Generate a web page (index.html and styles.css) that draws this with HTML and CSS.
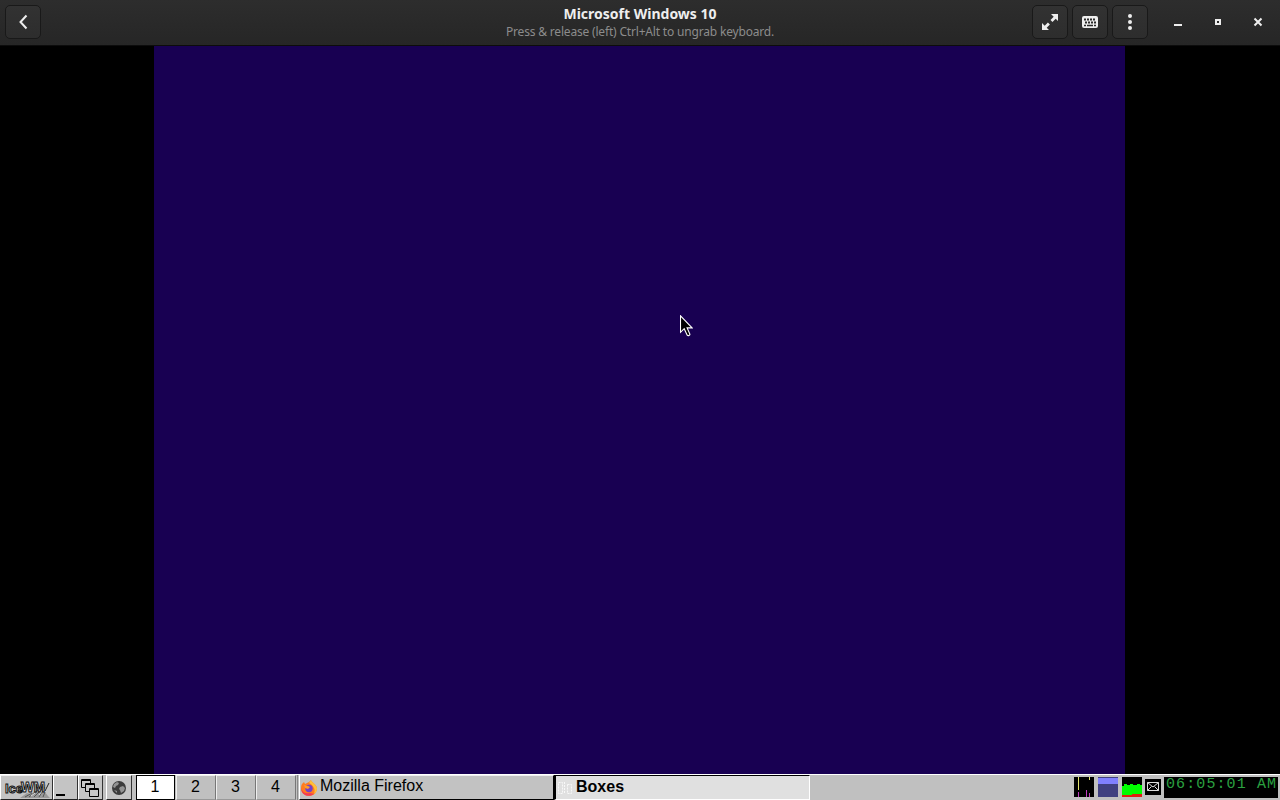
FILE: index.html
```html
<!DOCTYPE html>
<html lang="en">
<head>
  <meta charset="UTF-8" />
  <title>Microsoft Windows 10</title>
  <link rel="stylesheet" href="styles.css">
</head>
<body>
  <header class="headerbar">
    <button class="hbtn" aria-label="Back">
      <svg width="16" height="16" viewBox="0 0 16 16"><path d="M11.500 1.500 5.500 8l6 6.500" fill="none" stroke="#eee" stroke-width="2"/></svg>
    </button>
    <div class="titles">
      <div class="title">Microsoft Windows 10</div>
      <div class="subtitle">Press &amp; release (left) Ctrl+Alt to ungrab keyboard.</div>
    </div>
    <div class="actions">
      <button class="hbtn" aria-label="Fullscreen">
        <svg width="16" height="16" viewBox="0 0 16 16"><path d="M9 0h7v7l-2.300-2.300-3.200 3.200-2-2 3.200-3.200zM0 9v7h7l-2.300-2.300 3.200-3.200-2-2-3.200 3.200z" fill="#eee"/></svg>
      </button>
      <button class="hbtn" aria-label="Keyboard">
        <svg width="16" height="16" viewBox="0 0 16 16"><rect y="2" width="16" height="12" rx="2" fill="#eee"/><path d="M2 5.500h12M3 8.500h11" stroke="#2a2a2a" stroke-width="2" stroke-dasharray="2 1"/><path d="M2 11.500h2M5 11.500h6M12 11.500h2" stroke="#2a2a2a" stroke-width="1.500"/></svg>
      </button>
      <button class="hbtn" aria-label="Menu">
        <svg width="16" height="16" viewBox="0 0 16 16" fill="#eee"><circle cx="8" cy="2" r="2"/><circle cx="8" cy="8" r="2"/><circle cx="8" cy="14" r="2"/></svg>
      </button>
    </div>
    <div class="controls">
      <svg width="16" height="16" viewBox="0 0 16 16"><path d="M4 10h8v2H4z" fill="#eee"/></svg>
      <svg width="16" height="16" viewBox="0 0 16 16"><path d="M6 6h4v4H6z" fill="none" stroke="#eee" stroke-width="2"/></svg>
      <svg width="16" height="16" viewBox="0 0 16 16"><path d="m4.500 4.500 7 7m0-7-7 7" stroke="#eee" stroke-width="2"/></svg>
    </div>
  </header>

  <main class="display">
    <div class="guest">
      <svg class="pointer" width="13" height="22" viewBox="0 0 13 22"><path d="M.5.800v16.500l3.700-3.600 3 6.500c.8 1 3.200.2 2.600-1.300l-2.700-6h5z" fill="#000" stroke="#fff" stroke-width="1.100"/></svg>
    </div>
  </main>

  <footer class="taskbar">
    <div class="tb logo">
      <svg width="48" height="20" viewBox="0 0 48 20">
        <path d="m17 20 7-5 4 1 5-4 3 2 5-6 2-2-2 7 4 5 2 2z" fill="#999"/>
        <path d="m22 19 7-4m-3 4 9-7m-4 7 8-8m-3 8 6-10m-2 10 2-5" stroke="#555"/>
        <path d="m28 18 4-3m4 2 3-4" stroke="#ddd"/>
        <text class="logo-text" x="2" y="15" textLength="18" lengthAdjust="spacingAndGlyphs">Ice</text>
        <text class="logo-text wm" x="18" y="14" textLength="24" lengthAdjust="spacingAndGlyphs">WM</text>
        <path d="m42 13 4-8" stroke="#222"/>
      </svg>
    </div>
    <div class="tb desk"><svg width="24" height="24"><path d="M3 18h9v2H3z" fill="#000"/></svg></div>
    <div class="tb list">
      <svg width="20" height="20" fill="#c8c8c8" stroke="#000"><path d="M1.500 1.500h9v8h-9z"/><path d="M1 2.500h10"/><path d="M5.500 5.500h9v8h-9z"/><path d="M5 6.500h10"/><path d="M9.500 10.500h9v8h-9z"/><path d="M9 11.500h10"/></svg>
    </div>
    <div class="tb globe">
      <svg width="16" height="16"><circle cx="8" cy="8" r="7" fill="#3c3c3c"/><path d="m3 4 3-2 2 1-1 2-2 1-1 2-2-1zm6 3 3-1 2 2-1 3-3 2-1-3-1-1zM3 10l3 1v2z" fill="#949494"/></svg>
    </div>
    <div class="workspaces">
      <div class="ws current">1</div>
      <div class="ws">2</div>
      <div class="ws">3</div>
      <div class="ws">4</div>
    </div>
    <div class="task">
      <svg width="16" height="16" viewBox="0 0 16 16">
        <path d="M1 4 3 2l1 2 4-2 2-2c0 2 5 4 6 8 0 5-4 8-8 8S0 13 0 9c0-2 0-3 1-5z" fill="#ff7b22"/>
        <path d="M10 0c0 2 5 4 6 8 0 3-1 5-3 6 2-5-1-9-5-11z" fill="#ffc13a"/>
        <path d="M0 8c1 4 4 6 9 5l4 1c-4 3-12 3-13-6z" fill="#f33c55"/>
        <circle cx="8" cy="8.500" r="3.700" fill="#7542c6"/><path d="m3 5 4 1 2 1-2 2-3-1z" fill="#ff9b28"/>
      </svg>
      <span>Mozilla Firefox</span>
    </div>
    <div class="task active">
      <svg width="16" height="16"><path d="M1.500 2.500h4v11h-4zM7.500 2v12M10.500 4.500h4v9h-4z" fill="none" stroke="#f8f8f8" stroke-dasharray="2 1"/></svg>
      <span>Boxes</span>
    </div>
    <div class="tray">
      <svg class="monitor" width="20" height="20"><path d="M0 0h20v20H0z"/><path d="M4.500 0v13M15.500 0v3" stroke="#e4e46c"/><path d="M4.500 15v5M12.500 13v7M15.500 16v4" stroke="#c03cc0"/></svg>
      <svg class="monitor" width="20" height="20"><path d="M0 0h20v20H0z" fill="#404080"/><path d="M0 1h20v6H0z" fill="#8080ff"/></svg>
      <svg class="monitor" width="20" height="20"><path d="M0 0h20v20H0z"/><path d="M0 9h2V7h3v1h3V7h3v1h4V7h3v1h2v12H0z" fill="#0f0"/><path d="M0 18h10v-1h10v3H0z" fill="#e02010"/></svg>
      <svg class="mail" width="16" height="16"><path d="M0 0h16v16H0z"/><path d="M2.500 3.500h11v8h-11zl5.500 4.500 5.500-4.500M2.500 11.500l4-4m3 0 4 4" fill="none" stroke="#ddd"/></svg>
      <div class="clock">06:05:01 AM</div>
    </div>
  </footer>
</body>
</html>
```
FILE: styles.css
```css
* {
  box-sizing: border-box;
}
body {
  margin: 0;
  height: 800px;
  display: flex;
  flex-direction: column;
  overflow: hidden;
  background: #000;
  font-family: "Liberation Sans", Arial, sans-serif;
}
svg {
  display: block;
  flex: none;
}
.headerbar {
  height: 46px;
  flex: none;
  display: grid;
  grid-template-columns: 248px 1fr 116px 132px;
  align-items: center;
  padding: 0 0 1px 5px;
  background: linear-gradient(#2d2d2d, #262626);
  border-bottom: 1px solid #0c0c0c;
}
.hbtn {
  width: 36px;
  height: 34px;
  padding: 0;
  display: flex;
  align-items: center;
  justify-content: center;
  background: linear-gradient(#323232, #2d2d2d);
  border: 1px solid #191919;
  border-radius: 5px;
}
.titles {
  text-align: center;
  font-family: "Noto Sans", "Open Sans", sans-serif;
  margin-left: -5px;
}
.title {
  font-size: 14px;
  line-height: 19px;
  font-weight: 700;
  color: #eee;
}
.subtitle {
  font-size: 12px;
  line-height: 17px;
  letter-spacing: -0.18px;
  color: #8c8c8c;
}
.actions {
  display: flex;
  gap: 4px;
}
.controls {
  display: flex;
  gap: 24px;
  padding-left: 22px;
}
.display {
  flex: 1;
  display: flex;
  padding-left: 154px;
}
.guest {
  position: relative;
  width: 971px;
  background: #180052;
}
.pointer {
  position: absolute;
  left: 526px;
  top: 269px;
}
.taskbar {
  height: 26px;
  flex: none;
  display: flex;
  background: #c0c0c0;
  border-top: 1px solid #fff;
}
.tb {
  height: 25px;
  display: flex;
  align-items: center;
  justify-content: center;
  background: #c4c4c4;
  border-left: 1px solid #fff;
  border-top: 1px solid #eee;
  border-right: 1px solid #333;
  border-bottom: 1px solid #222;
}
.logo { width: 53px; }
.desk {
  width: 25px;
  padding-right: 1px;
}
.list {
  width: 25px;
  padding-right: 1px;
}
.globe {
  width: 26px;
  margin-left: 3px;
}
.logo-text {
  font: bold 13px "Liberation Sans", sans-serif;
  fill: #ddd;
  stroke: #111;
  stroke-width: 1px;
}
.logo-text.wm {
  font-size: 14px;
}
.workspaces {
  display: flex;
  margin-left: 4px;
  padding-right: 1px;
  border-right: 1px solid #888;
}
.ws {
  width: 40px;
  height: 25px;
  padding-right: 1px;
  border-right: 1px solid #777;
  border-left: 1px solid #eee;
  border-top: 1px solid #eee;
  border-bottom: 1px solid #999;
  text-align: center;
  font-size: 16px;
  line-height: 21px;
}
.ws.current {
  width: 39px;
  margin-right: 1px;
  background: #fff;
  border: 1px solid #000;
}
.task {
  width: 255px;
  height: 25px;
  display: flex;
  gap: 3px;
  padding-left: 1px;
  margin-left: 1px;
  border-left: 1px solid #fff;
  border-top: 1px solid #eee;
  border-bottom: 1px solid #000;
  border-right: 1px solid #000;
  background: #c2c2c2;
  font-size: 16px;
  line-height: 20px;
}
.task svg {
  margin-top: 4px;
}
.task.active {
  width: 256px;
  margin-left: 0;
  padding-left: 1px;
  background: #e0e0e0;
  border: 1px solid #fff;
  border-top-color: #000;
  border-left: 2px solid #000;
  font-weight: bold;
  line-height: 21px;
}
.tray {
  display: flex;
  margin-left: auto;
  padding: 2px 2px 0 0;
}
.monitor {
  margin-right: 4px;
}
.mail {
  margin: 2px 3px 0 -1px;
}
.clock {
  width: 114px;
  height: 21px;
  background: #000;
  color: #2ba040;
  font: 15px/15px "Liberation Mono", monospace;
  letter-spacing: 1.1px;
  padding-left: 2px;
  white-space: nowrap;
}
```
